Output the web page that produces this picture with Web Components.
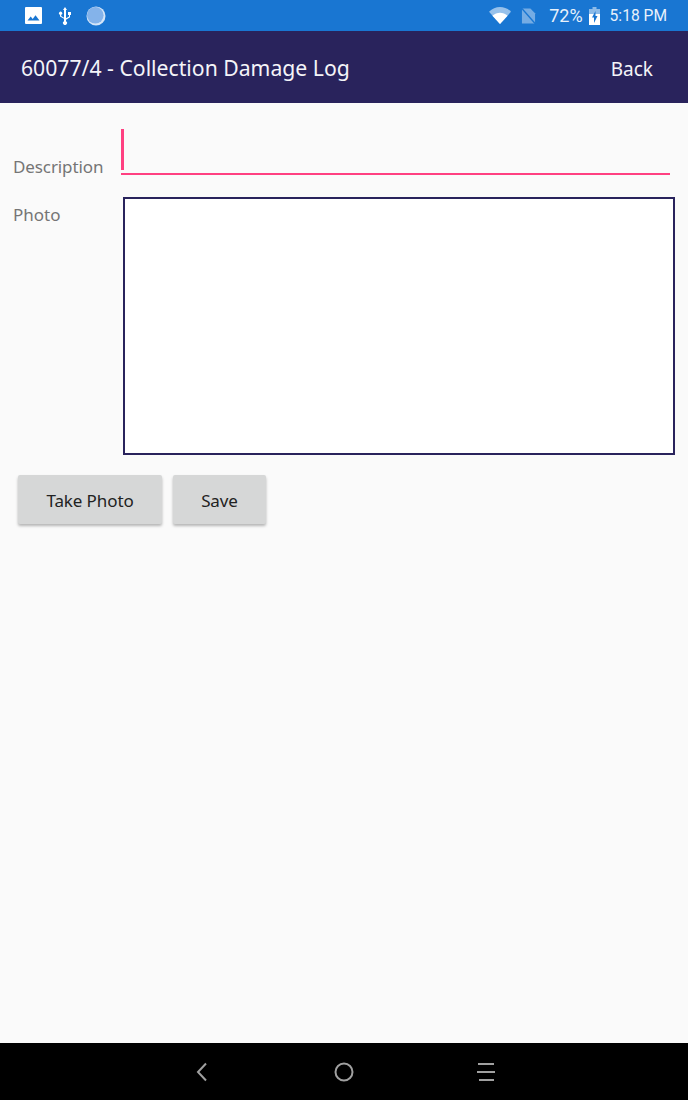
<!DOCTYPE html>
<html>
<head>
<meta charset="utf-8">
<style>
  html, body { margin: 0; height: 100%; }
  body { font-family: "Noto Sans", "Open Sans", sans-serif; background: #fafafa; }
  #app { display: flex; flex-direction: column; height: 1100px; overflow: hidden; }
</style>
</head>
<body>
<div id="app">
  <status-bar></status-bar>
  <app-bar title="60077/4 - Collection Damage Log" action="Back"></app-bar>
  <damage-form></damage-form>
  <nav-bar></nav-bar>
</div>
<script>
class StatusBar extends HTMLElement {
  connectedCallback() {
    this.attachShadow({ mode: 'open' });
    this.shadowRoot.innerHTML = `
      <style>
        :host { display: flex; align-items: center; height: 31px; background: #1976d2; color: #fff; padding: 0 21px 0 25px; flex: none; font-family: Roboto, sans-serif; }
        svg { display: block; flex: none; }
        .left { display: flex; align-items: center; }
        .right { margin-left: auto; display: flex; align-items: center; }
        .pct { font-size: 18px; margin-left: 13px; color: #e8f1fb; }
        .time { font-size: 15.6px; margin-left: 10px; color: #e8f1fb; }
      </style>
      <div class="left">
        <svg width="17" height="17" viewBox="0 0 17 17"><path fill="#fff" d="M1 0h15a1 1 0 0 1 1 1v15a1 1 0 0 1-1 1H1a1 1 0 0 1-1-1V1a1 1 0 0 1 1-1z"/><path fill="#1976d2" d="M2.500 13.500l3.200-4 2 2.400 2.800-3.700 4 5.300z"/></svg>
        <svg style="margin-left:16px" width="14" height="18" viewBox="0 0 14 18"><path fill="#fff" d="M7 0l2 3H8v8.200l3-1.700V8H10V5h3v3h-1v2.300l-4 2.400v1.500a2 2 0 1 1-2 0v-2.500L2 9.600V7.800a1.600 1.600 0 1 1 1.200 0v1.200L6 10.700V3H5z"/></svg>
        <svg style="margin-left:14px" width="20" height="20" viewBox="0 0 20 20"><circle cx="10" cy="10" r="9.500" fill="#d4e5f8"/><circle cx="9.300" cy="9.300" r="8.300" fill="#84b3ea"/></svg>
      </div>
      <div class="right">
        <svg width="22" height="17" viewBox="0 0 22 16" preserveAspectRatio="none"><path fill="#fff" fill-opacity=".55" d="M0 4.500C6-1.400 16-1.400 22 4.500L11 16z"/><path fill="#fff" d="M3.400 8.200c4.400-3.800 10.800-3.800 15.200 0L11 16z"/></svg>
        <svg style="margin-left:10px" width="15" height="18" viewBox="0 0 16 18"><path fill="#fff" fill-opacity=".4" d="M1 1h9l5 5v11H1z"/><path stroke="#1976d2" stroke-width="1.500" d="M0 0l16 18"/></svg>
        <span class="pct">72%</span>
        <svg style="margin-left:6px" width="11" height="18" viewBox="0 0 11 18"><path fill="#fff" fill-opacity=".5" d="M3.500 0h4v2h3.500v5H0V2h3.500z"/><path fill="#fff" d="M0 7h11v11H0z"/><path fill="#1976d2" d="M6.500 4L3 10.500h2V16l3.500-7h-2z"/></svg>
        <span class="time">5:18 PM</span>
      </div>`;
  }
}

class AppBar extends HTMLElement {
  connectedCallback() {
    this.attachShadow({ mode: 'open' });
    this.shadowRoot.innerHTML = `
      <style>
        :host { display: flex; align-items: center; justify-content: space-between; box-sizing: border-box; height: 72px; background: #29235c; color: #f4f4f8; padding: 4px 35px 0 21px; flex: none; }
        .title { font-size: 21.2px; margin-bottom: 3px; }
        .action { font-size: 19px; }
      </style>
      <span class="title">${this.getAttribute('title')}</span>
      <span class="action">${this.getAttribute('action')}</span>`;
  }
}

class FlatButton extends HTMLElement {
  connectedCallback() {
    this.attachShadow({ mode: 'open' });
    this.shadowRoot.innerHTML = `
      <style>
        :host { display: flex; align-items: center; justify-content: center; box-sizing: border-box; padding-top: 2px; height: 49px; background: #d6d7d7; color: #222; border-radius: 2px; font-size: 17px; letter-spacing: -.1px; box-shadow: 0 2px 3px rgba(0,0,0,.28); }
      </style>
      <slot></slot>`;
  }
}

class DamageForm extends HTMLElement {
  connectedCallback() {
    this.attachShadow({ mode: 'open' });
    this.shadowRoot.innerHTML = `
      <style>
        :host { display: block; flex: 1; padding: 26px 13px 0; color: #757575; font-size: 17px; }
        .row { display: flex; }
        .row label { width: 108px; flex: none; }
        .desc { height: 46px; align-items: flex-end; }
        .desc label { line-height: 24px; margin-bottom: -4px; letter-spacing: -.1px; }
        .input { width: 549px; height: 44px; position: relative; border-bottom: 2px solid #ff4081; }
        .caret { position: absolute; left: 0; top: 0; width: 3px; height: 41px; background: #ff4081; }
        .photo { margin-top: 22px; }
        .photo label { line-height: 24px; margin-top: 6px; }
        .frame { width: 550px; height: 254px; margin-left: 2px; background: #fff; border: 2px solid #29235c; box-sizing: content-box; }
        .buttons { display: flex; gap: 11px; margin: 20px 0 0 5px; }
        .take { width: 144px; }
        .save { width: 93px; }
      </style>
      <div class="row desc"><label>Description</label><div class="input"><div class="caret"></div></div></div>
      <div class="row photo"><label>Photo</label><div class="frame"></div></div>
      <div class="buttons">
        <flat-button class="take">Take Photo</flat-button>
        <flat-button class="save">Save</flat-button>
      </div>`;
  }
}

class NavBar extends HTMLElement {
  connectedCallback() {
    this.attachShadow({ mode: 'open' });
    this.shadowRoot.innerHTML = `
      <style>
        :host { display: flex; align-items: center; justify-content: center; gap: 122px; height: 57px; background: #000; flex: none; }
        svg { display: block; }
      </style>
      <svg width="20" height="20" viewBox="0 0 20 20"><path fill="none" stroke="#a0a0a0" stroke-width="2" d="M14 1.500L6 10l8 8.500"/></svg>
      <svg width="20" height="20" viewBox="0 0 20 20"><circle cx="10" cy="10" r="8.500" fill="none" stroke="#a0a0a0" stroke-width="2"/></svg>
      <svg width="20" height="20" viewBox="0 0 20 20"><path fill="none" stroke="#a0a0a0" stroke-width="2" d="M2 2h16M1 10h18M3 18h15"/></svg>`;
  }
}

customElements.define('flat-button', FlatButton);
customElements.define('status-bar', StatusBar);
customElements.define('app-bar', AppBar);
customElements.define('damage-form', DamageForm);
customElements.define('nav-bar', NavBar);
</script>
</body>
</html>
